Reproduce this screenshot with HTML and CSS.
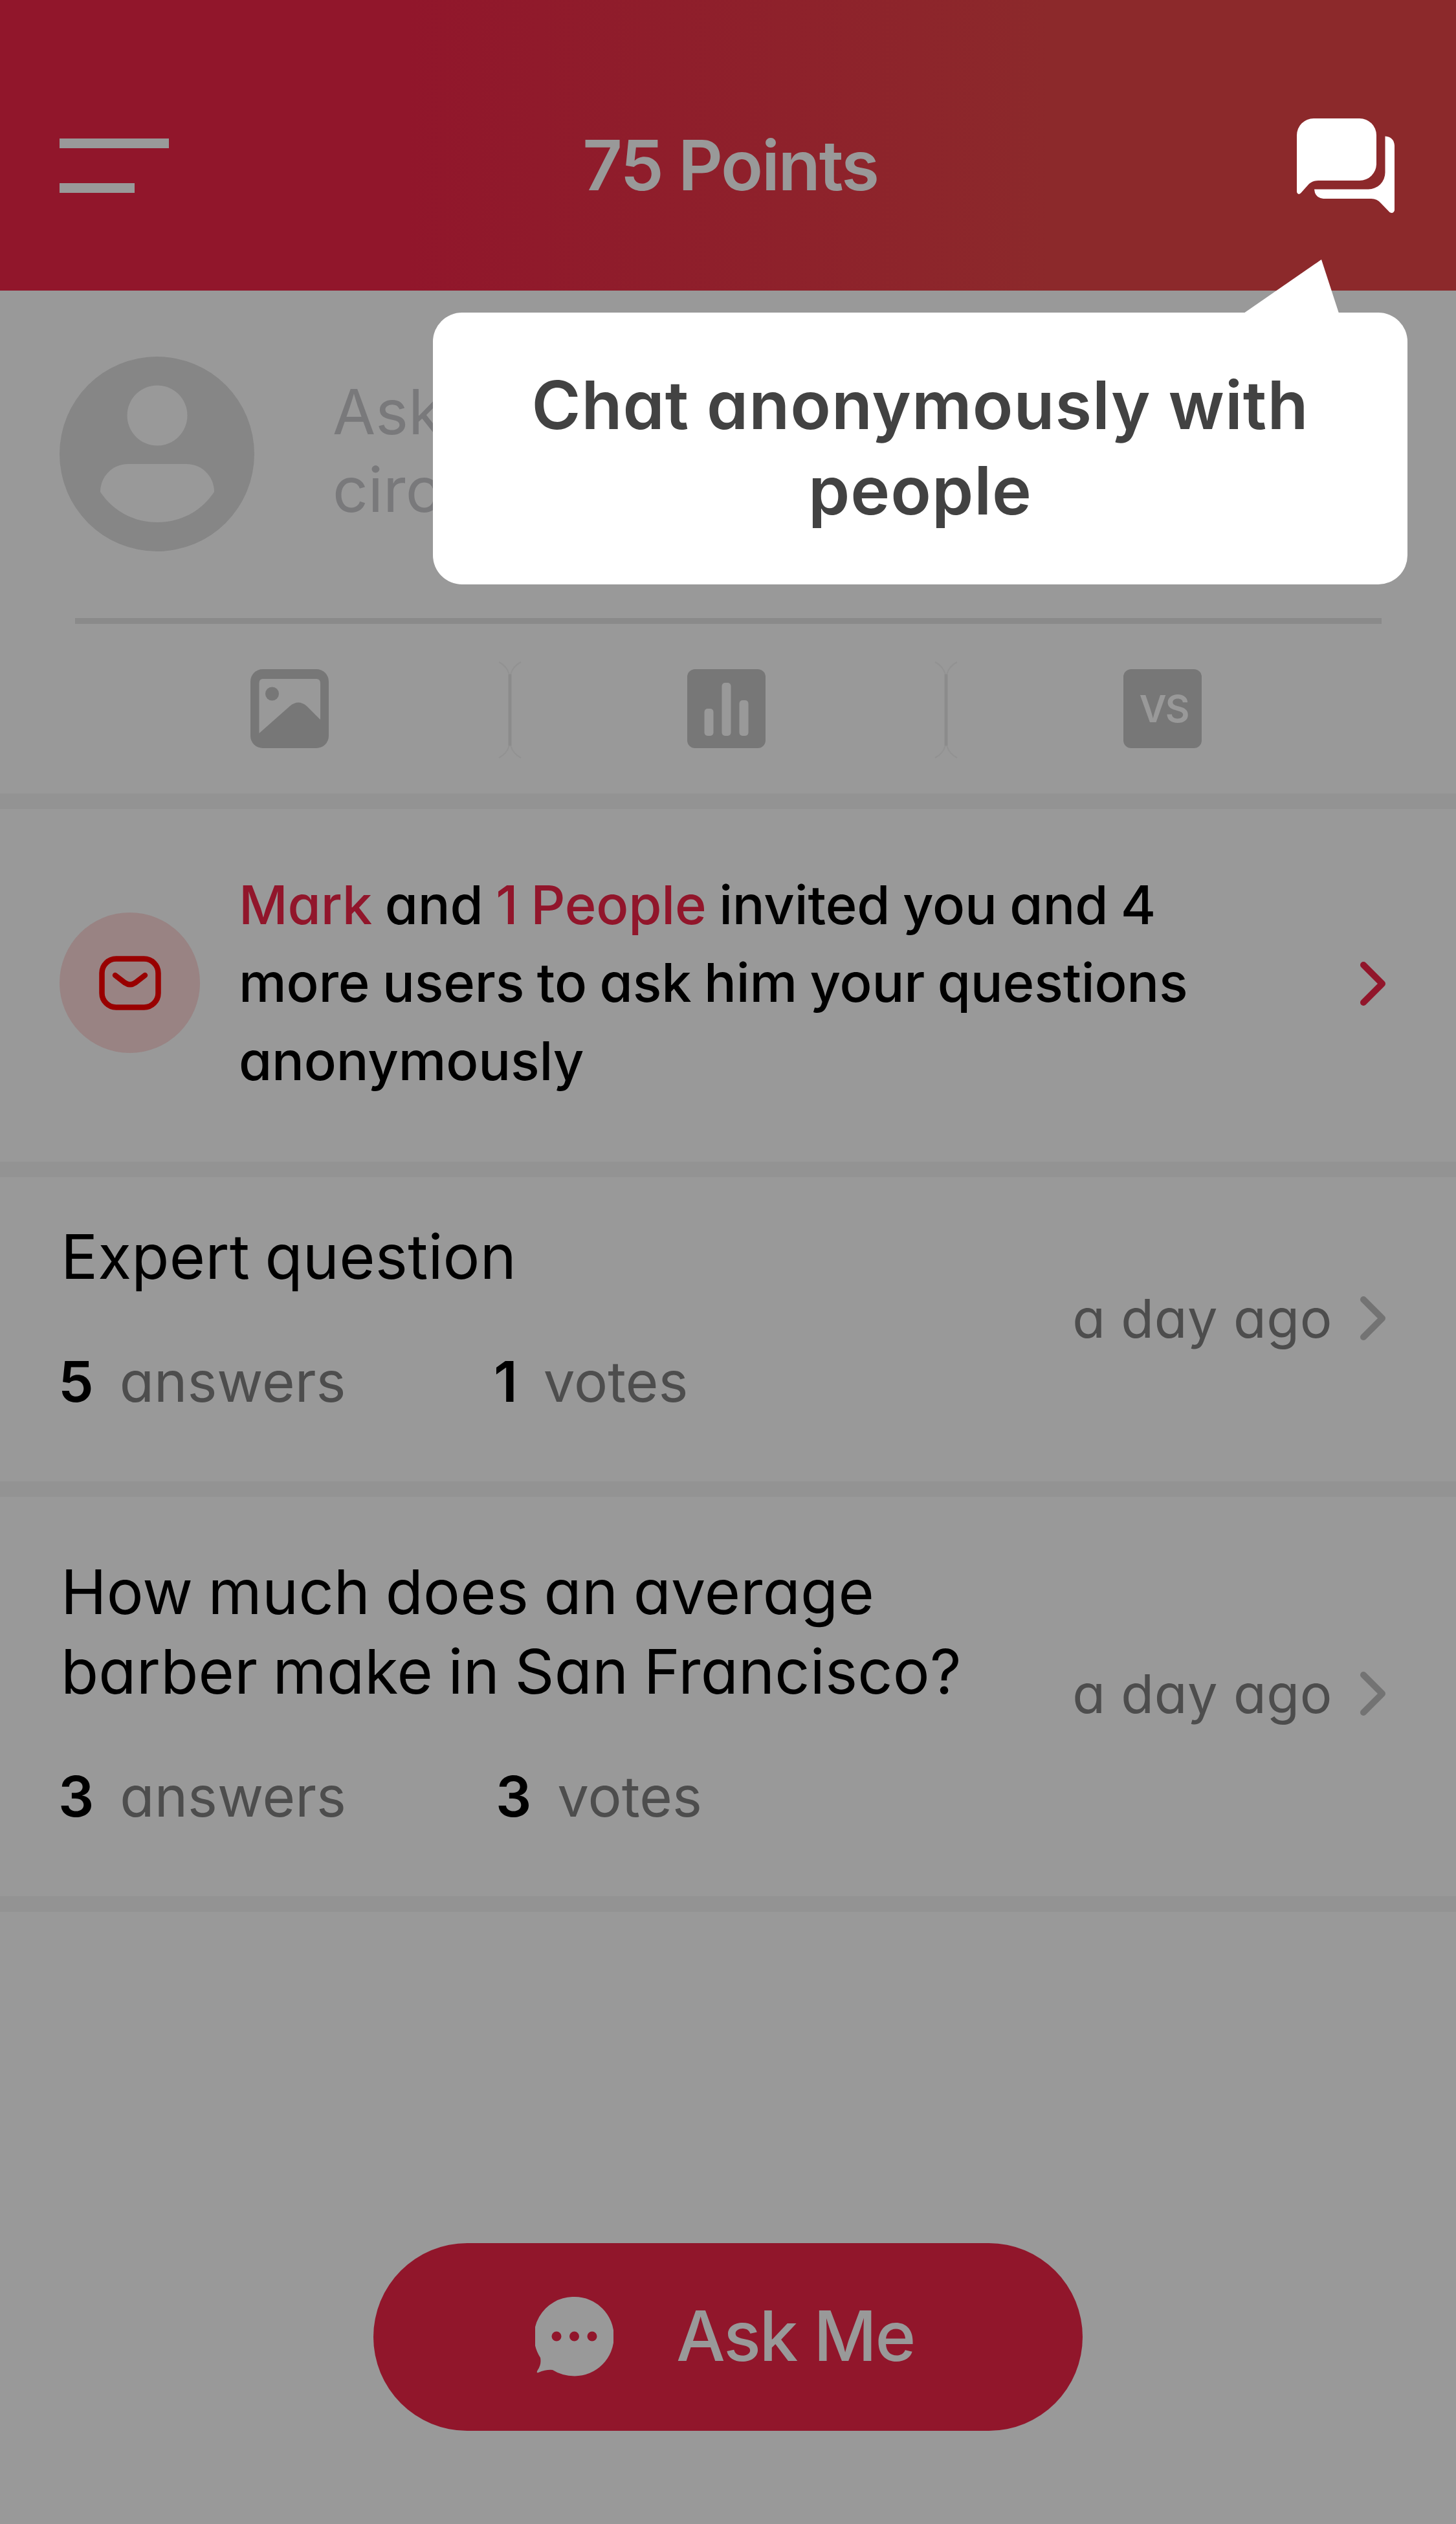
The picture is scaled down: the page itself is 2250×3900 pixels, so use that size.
FILE: index.html
```html
<!DOCTYPE html>
<html lang="en">
<head>
<meta charset="utf-8">
<title>75 Points</title>
<link rel="stylesheet" href="styles.css">
</head>
<body>
<div class="screen">
  <header class="topbar">
    <div class="menu"><span class="menu-line"></span><span class="menu-line short"></span></div>
    <h1 class="points">75 Points</h1>
    <svg class="chat" viewBox="0 0 151 147"><path d="M26 0H97A26 26 0 0 1 123 26V70A26 26 0 0 1 97 96H33Q25 96 19 101L6 115.500Q2 119 0 114V26A26 26 0 0 1 26 0Z"/><path d="M136.500 27.500Q150 28.500 151 42V142Q149 148 143.500 145L130 131Q124 124 115 124H41Q28 123 27 109.500H110A26 26 0 0 0 136.500 83Z"/></svg>
  </header>

  <section class="composer">
    <div class="prompt">
      <svg class="avatar" viewBox="0 0 301 301"><circle class="avatar-bg" cx="150.500" cy="150.500" r="150.500"/><circle class="avatar-fg" cx="151" cy="91" r="46.500"/><path class="avatar-fg" d="M106 166H196C221 166 239 186 239 209C220 238 188 256 151 256C114 256 82 238 63 209C63 186 81 166 106 166Z"/></svg>
      <p class="prompt-text">Ask<br>circ</p>
    </div>
    <div class="rule"></div>
    <div class="tools">
      <svg class="tool" viewBox="0 0 121 122"><rect width="121" height="122" rx="19"/><path class="cut" d="M19 15H102Q108 15 108 22V78L87 57Q74 46 61 57L13.500 99V22Q13.500 15 19 15Z"/><circle cx="33.500" cy="38" r="10.500"/></svg>
      <svg class="split" viewBox="0 0 36 150"><path class="split-curve" d="M1 1Q13 7 17 20V130Q13 143 1 149M35 1Q23 7 19 20V130Q23 143 35 149"/><path class="split-bar" d="M18 20V130"/></svg>
      <svg class="tool middle" viewBox="0 0 121 122"><rect width="121" height="122" rx="12"/><g class="cut"><rect x="26.500" y="61" width="14" height="42" rx="5"/><rect x="53.500" y="21" width="14" height="82" rx="5"/><rect x="80.500" y="48" width="14" height="55" rx="5"/></g></svg>
      <svg class="split" viewBox="0 0 36 150"><path class="split-curve" d="M1 1Q13 7 17 20V130Q13 143 1 149M35 1Q23 7 19 20V130Q23 143 35 149"/><path class="split-bar" d="M18 20V130"/></svg>
      <div class="tool versus">VS</div>
    </div>
  </section>

  <section class="invite">
    <div class="invite-badge"><svg viewBox="0 0 96 84"><rect x="4.500" y="4.500" width="87" height="75" rx="22"/><path d="M25 30L40 41.500Q48 47 56 41.500L71 30"/></svg></div>
    <p class="invite-text"><b>Mark</b> and <b>1 People</b> invited you and 4<br>more users to ask him your questions<br>anonymously</p>
    <svg class="chevron accent" viewBox="0 0 42 70"><path d="M6 6L35 35L6 64"/></svg>
  </section>

  <section class="question">
    <div class="question-main">
      <h2>Expert question</h2>
      <div class="stats"><span class="stat"><b>5</b> <span>answers</span></span><span class="stat"><b>1</b> <span>votes</span></span></div>
    </div>
    <time>a day ago</time>
    <svg class="chevron" viewBox="0 0 42 70"><path d="M6 6L35 35L6 64"/></svg>
  </section>

  <section class="question tall">
    <div class="question-main">
      <h2>How much does an average<br>barber make in San Francisco?</h2>
      <div class="stats"><span class="stat"><b>3</b> <span>answers</span></span><span class="stat"><b>3</b> <span>votes</span></span></div>
    </div>
    <time>a day ago</time>
    <svg class="chevron" viewBox="0 0 42 70"><path d="M6 6L35 35L6 64"/></svg>
  </section>

  <div class="ask">
    <svg class="ask-icon" viewBox="0 0 121 124"><path d="M61 0A60.500 61 0 1 1 61 122.500Q41 122 27 113Q17 112 5 117Q1 118 4 113Q10 104 8 94A61 61 0 0 1 61 0Z"/><g class="dots"><circle cx="33" cy="61" r="7.500"/><circle cx="60.500" cy="61" r="7.500"/><circle cx="88" cy="61" r="7.500"/></g></svg>
    <span class="ask-label">Ask Me</span>
  </div>

  <div class="tooltip">
    <svg class="pointer" viewBox="0 0 147 83"><path d="M0 83L120 0L147 83Z"/></svg>
    Chat anonymously with<br>people
  </div>
</div>
</body>
</html>
```
FILE: styles.css
```css
* { box-sizing: border-box; margin: 0; padding: 0; }
body { background: #999; font-family: Inter, "Liberation Sans", sans-serif; font-feature-settings: "cv11"; font-kerning: normal; }
svg { display: block; flex: none; }
.screen { position: relative; width: 2250px; height: 3900px; overflow: hidden; background: #999; }

.topbar { display: grid; grid-template-columns: 1fr auto 1fr; align-items: center; height: 449px; padding: 63px 95px 0 92px; background: linear-gradient(90deg, #91162b 28%, #8c292b 72%); }
.menu { display: flex; flex-direction: column; gap: 54px; }
.menu-line { width: 169px; height: 15px; background: #999; }
.menu-line.short { width: 116px; }
.points { padding: 0 0 2px 10px; font-size: 107px; font-weight: 600; line-height: 130px; letter-spacing: -2.300px; color: #999; }
.chat { width: 151px; height: 147px; justify-self: end; fill: #fff; }

.composer { height: 801px; padding-top: 102px; border-bottom: 24px solid #939393; }
.prompt { display: flex; gap: 121px; padding-left: 92px; }
.avatar { width: 301px; height: 301px; }
.avatar-bg { fill: #868686; }
.avatar-fg { fill: #999; }
.prompt-text { padding-top: 25px; font-size: 96px; line-height: 120px; color: #79797b; }
.rule { width: 2019px; height: 9px; margin: 103px 0 58px 116px; background: #8a8a8a; }
.tools { display: grid; grid-template-columns: 645px 36px 638px 36px 633px; justify-items: center; height: 150px; padding-left: 125px; }
.tool { width: 121px; height: 122px; margin-top: 12px; fill: #777; }
.tool.middle { margin-right: 6px; }
.cut { fill: #999; }
.split { width: 36px; height: 150px; fill: none; }
.split-curve { stroke: #929292; stroke-width: 2; }
.split-bar { stroke: #8b8b8b; stroke-width: 5; }
.versus { display: flex; align-items: center; justify-content: center; padding-left: 4px; border-radius: 12px; background: #777; color: #999; font-size: 58px; font-weight: 600; letter-spacing: -2px; }

.invite { display: flex; align-items: center; height: 569px; padding: 0 107px 8px 92px; border-bottom: 24px solid #939393; }
.invite-badge { display: flex; align-items: center; justify-content: center; width: 217px; height: 217px; border-radius: 50%; background: #998383; }
.invite-badge svg { width: 96px; height: 84px; fill: none; stroke: #900; stroke-width: 8.500; stroke-linecap: round; }
.invite-text { flex: 1; margin-left: 60px; font-size: 83px; font-weight: 550; line-height: 120.500px; letter-spacing: -0.200px; word-spacing: -2.300px; color: #000; }
.invite-text b { font-weight: 550; color: #91162b; }
.chevron { width: 42px; height: 70px; fill: none; stroke: #737373; stroke-width: 10; stroke-linecap: round; stroke-linejoin: round; }
.chevron.accent { margin-top: 3px; stroke: #91162b; }

.question { display: flex; align-items: center; height: 494px; padding: 60px 107px 99px 92px; border-bottom: 24px solid #939393; }
.question.tall { height: 641px; padding-top: 85px; }
.question-main { flex: 1; }
.question h2 { padding-left: 2px; font-size: 95px; font-weight: 400; line-height: 123px; letter-spacing: 0.200px; word-spacing: -3.500px; color: #000; }
.stats { display: flex; margin: 77px 0 0 -2px; font-size: 87px; line-height: 110px; color: #4d4d4d; }
.stat { display: flex; gap: 40px; }
.stat:first-child { width: 673px; }
.tall .stat:first-child { width: 676px; }
.stat b { font-weight: 600; color: #000; }
.question time { margin: 4px 42px 0 0; font-size: 83px; line-height: 110px; letter-spacing: 0.500px; color: #4d4d4d; }
.question .chevron { margin-top: 4px; }

.ask { display: flex; align-items: center; width: 1096px; height: 290px; margin: 512px 0 0 577px; padding-left: 250px; border-radius: 145px; background: #91162b; font-size: 107px; font-weight: 550; color: #999; }
.ask-icon { width: 121px; height: 124px; margin-right: 97px; fill: #999; }
.ask-label { margin-bottom: 4px; letter-spacing: -2.300px; }
.dots { fill: #91162b; }

.tooltip { position: absolute; top: 483px; left: 669px; width: 1506px; height: 420px; padding-top: 77px; border-radius: 45px; background: #fff; font-size: 103px; font-weight: 600; line-height: 132px; letter-spacing: 1px; text-align: center; color: #424242; }
.pointer { position: absolute; top: -82px; left: 1253px; width: 147px; height: 83px; fill: #fff; }
```
